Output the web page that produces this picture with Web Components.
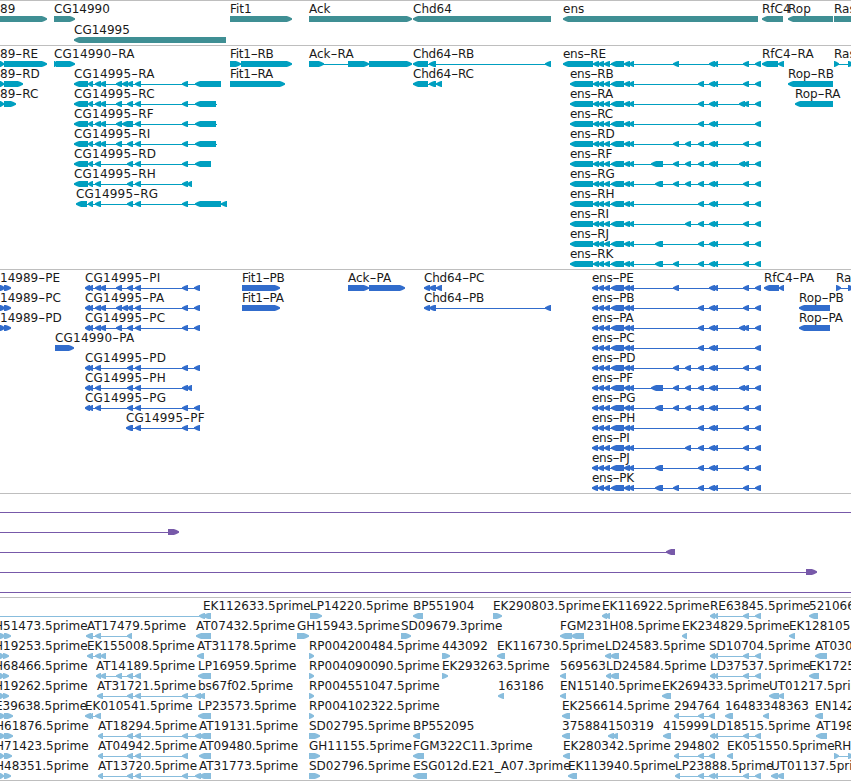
<!DOCTYPE html>
<html lang="en">
<head>
<meta charset="utf-8">
<title>Genome browser</title>
<style>
  body{
    margin: 0;
    background: #fff;
    overflow: hidden;
  }
</style>
</head>
<body>
<genome-browser>
  <genome-track name="genes" color="#3f8f94" row="21"></genome-track>
  <genome-track name="transcripts" color="#009fc0" row="20"></genome-track>
  <genome-track name="proteins" color="#316ccc" row="20"></genome-track>
  <genome-track name="insertions" color="#7759a9" row="20"></genome-track>
  <genome-track name="ests" color="#88bddd" row="20"></genome-track>
</genome-browser>

<script>
// exon groups shared by the isoforms
const CG = {
  a: '95-101 100-106',
  b: '95-101',
  end: '127-133 135-141 182-188'
};
const ENS = {
  A: '673-679', B: '685-691', C: '698-704', D: '709-715 713-718',
  E: '743-749', W: '739-745 743-749', F: '755-761',
  G: '655-663', H: '651-663'
};
const ensTail = keys => '598-604 604-610 611-624 624-630 629-634 ' +
  keys.split('').map(k => ENS[k]).join(' ');
const LD = '710-715 714-718 743-749 755-761';
const AT = '98-103 127-133 135-141 182-188';

const isoforms = [
  ['E', 'ADEF'], ['B', 'CDEF'], ['A', 'CDWF'], ['C', 'CDF'],
  ['D', 'ABCDEF'], ['F', 'HABCDWF'], ['G', 'GABCDEF'], ['H', 'CDEF'],
  ['I', 'BCDEF'], ['J', 'GCDEF'], ['K', 'GACDEF']
];

// tracking of the hyphenated labels, by gene
const SPACING = [
  [/^CG\d+-/, .2],
  [/^ens-/, -.3],
  [/^Fit1-/, -.3],
  [/^Chd64-/, -.2],
  [/^Rop-/, -.1]
];

// one feature: [label, label x, strand, exons, line start, line end]
const TRACKS = {
  genes: [
    [
      ['89', 0, '+', '0-47'],
      ['CG14990', 54, '+', '54-75'],
      ['Fit1', 230, '+', '230-292'],
      ['Ack', 309, '+', '309-412'],
      ['Chd64', 413, '-', '413-551'],
      ['ens', 563, '-', '563-758'],
      ['RfC4', 762, '-', '762-783'],
      ['Rop', 788, '-', '788-833'],
      ['Ras', 834, '+', '834-870']
    ],
    [['CG14995', 74, '-', '74-226']]
  ],
  transcripts: [
    [
      ['89-RE', 0, '+', '0-4 4-47'],
      ['CG14990-RA', 54, '+', '54-58 56-75'],
      ['Fit1-RB', 230, '+', '230-241 241-292'],
      ['Ack-RA', 309, '+', '309-324 348-369 369-412'],
      ['Chd64-RB', 413, '-', '413-428 429-436 545-551'],
      ['RfC4-RA', 762, '-', '762-778 778-784'],
      ['Ras', 834, '+', '834-839 848-854']
    ],
    [
      ['89-RD', 0, '+', '0-4 4-23'],
      ['CG14995-RA', 74, '-', `74-88 88-93 ${CG.a} 116-122 122-128 ${CG.end} 195-221`],
      ['Fit1-RA', 230, '+', '230-285'],
      ['Chd64-RC', 413, '-', '413-428 429-436 436-442'],
      ['Rop-RB', 788, '-', '788-833']
    ],
    [
      ['89-RC', 0, '+', '0-4 4-16'],
      ['CG14995-RC', 74, '-', `74-88 88-93 ${CG.a} 116-122 ${CG.end} 195-216`, 75, 217],
      ['Rop-RA', 795, '-', '795-833']
    ],
    [['CG14995-RF', 74, '-', `74-88 88-93 ${CG.a} 116-122 122-133 ${CG.end} 195-216`, 75, 217]],
    [['CG14995-RI', 74, '-', `74-88 88-93 ${CG.a} 116-122 ${CG.end} 195-216`, 75, 217]],
    [['CG14995-RD', 74, '-', `74-88 88-93 ${CG.b} ${CG.end} 195-211`]],
    [['CG14995-RH', 74, '-', `74-88 88-93 ${CG.b} ${CG.end} 187-192`]],
    [['CG14995-RG', 76, '-', `76-87 88-93 ${CG.b} ${CG.end} 195-221 221-227`]],
    [], [], []
  ],
  proteins: [
    [
      ['14989-PE', 0, '+', '0-5 4-11'],
      ['CG14995-PI', 85, '-', `85-90 88-93 ${CG.a} 116-122 ${CG.end} 194-200`],
      ['Fit1-PB', 242, '+', '242-280'],
      ['Ack-PA', 348, '+', '348-369 369-405'],
      ['Chd64-PC', 424, '-', '424-430 429-436 436-442'],
      ['RfC4-PA', 764, '-', '764-779 779-784'],
      ['Ras', 836, '+', '836-841 848-854']
    ],
    [
      ['14989-PC', 0, '+', '0-5 4-11'],
      ['CG14995-PA', 85, '-', `85-90 88-93 ${CG.a} 116-122 122-128 ${CG.end} 194-200`],
      ['Fit1-PA', 242, '+', '242-280'],
      ['Chd64-PB', 424, '-', '424-430 429-436 545-551'],
      ['Rop-PB', 799, '-', '799-830']
    ],
    [
      ['14989-PD', 0, '+', '0-5 4-11'],
      ['CG14995-PC', 85, '-', `85-90 88-93 ${CG.a} 116-122 ${CG.end} 194-200`],
      ['Rop-PA', 799, '-', '799-830']
    ],
    [['CG14990-PA', 55, '+', '55-74']],
    [['CG14995-PD', 85, '-', `85-90 88-93 ${CG.b} ${CG.end} 194-200`]],
    [['CG14995-PH', 85, '-', `85-90 88-93 ${CG.b} ${CG.end} 187-192`]],
    [['CG14995-PG', 85, '-', `85-90 88-93 ${CG.b} ${CG.end} 194-200`]],
    [['CG14995-PF', 126, '-', '126-133 135-141 182-188 194-200']],
    [], [], []
  ],
  insertions: [
    [['', 0, '+', '', 0, 851]],
    [['', 0, '+', '168-179', 0, 178]],
    [['', 0, '-', '666-675', 0, 675]],
    [['', 0, '+', '806-817', 0, 816]],
    [['', 0, '+', '', 0, 851]]
  ],
  ests: [
    [
      ['EK112633.5prime', 203, '-', '199-205 203-211', 0, 211],
      ['LP14220.5prime', 310, '+', '310-322'],
      ['BP551904', 413, '-', '413-423'],
      ['EK290803.5prime', 493, '+', '493-502'],
      ['EK116922.5prime', 602, '-', '602-607 605-610'],
      ['RE63845.5prime', 710, '-', LD],
      ['521066', 809, '-', '809-818']
    ],
    [
      ['H51473.5prime', -6, '+', '0-5 4-11'],
      ['AT17479.5prime', 87, '-', '86-93 95-101 127-132'],
      ['AT07432.5prime', 196, '-', '196-211'],
      ['GH15943.5prime', 297, '+', '297-309'],
      ['SD09679.3prime', 401, '+', '401-411'],
      ['FGM231H08.5prime', 560, '-', '560-572 571-584'],
      ['EK234829.5prime', 682, '-', '682-687'],
      ['EK128105', 789, '-', '789-795']
    ],
    [
      ['H19253.5prime', -6, '+', '0-4 3-9'],
      ['EK155008.5prime', 87, '-', '87-93 95-101 100-106'],
      ['AT31178.5prime', 197, '-', '197-204'],
      ['RP004200484.5prime', 309, '+', '309-314'],
      ['443092', 442, '+', '442-450'],
      ['EK116730.5prime', 497, '-', '497-505'],
      ['LD24583.5prime', 605, '-', '605-611 610-619'],
      ['SD10704.5prime', 709, '-', LD],
      ['AT030', 815, '-', '815-827']
    ],
    [
      ['H68466.5prime', -6, '+', '0-4 3-9'],
      ['AT14189.5prime', 96, '-', '96-101 100-106 116-122 127-133 135-141'],
      ['LP16959.5prime', 198, '-', '198-211'],
      ['RP004090090.5prime', 309, '+', '309-314'],
      ['EK293263.5prime', 442, '+', '442-448'],
      ['569563', 560, '-', '560-566'],
      ['LD24584.5prime', 606, '-', '606-611 610-619'],
      ['LD37537.5prime', 710, '-', LD],
      ['EK1725', 809, '-', '809-819']
    ],
    [
      ['H19262.5prime', -6, '+', '0-4 3-9'],
      ['AT31721.5prime', 97, '-', '97-103 127-133 135-141 182-188 195-201'],
      ['bs67f02.5prime', 198, '-', '199-205'],
      ['RP004551047.5prime', 309, '+', '309-314'],
      ['163186', 498, '-', '498-504'],
      ['EN15140.5prime', 560, '-', '560-566'],
      ['EK269433.5prime', 662, '-', '662-671'],
      ['UT01217.5prime', 769, '-', '769-779 778-784']
    ],
    [
      ['E39638.5prime', -5, '+', '0-5 4-13'],
      ['EK010541.5prime', 85, '-', '85-91 89-93 95-101'],
      ['LP23573.5prime', 198, '-', '198-211'],
      ['RP004102322.5prime', 309, '+', '309-314'],
      ['EK256614.5prime', 562, '-', '562-570'],
      ['294764', 674, '-', '674-679 698-704 709-715'],
      ['16483', 725, '-', '725-733'],
      ['348363', 763, '-', '763-769'],
      ['EN142', 815, '-', '815-823']
    ],
    [
      ['H61876.5prime', -5, '+', '0-5 4-13'],
      ['AT18294.5prime', 98, '-', AT + ' 195-201 199-211'],
      ['AT19131.5prime', 199, '-', ''],
      ['SD02795.5prime', 309, '+', '309-320'],
      ['BP552095', 413, '-', '413-420'],
      ['375884', 562, '-', '562-570'],
      ['150319', 608, '-', '608-614 612-618'],
      ['415999', 663, '-', '663-671'],
      ['LD18515.5prime', 710, '-', LD],
      ['AT198', 816, '-', '816-827']
    ],
    [
      ['H71423.5prime', -5, '+', '0-4 4-12'],
      ['AT04942.5prime', 98, '-', AT],
      ['AT09480.5prime', 199, '-', '199-211'],
      ['GH11155.5prime', 309, '+', '309-320'],
      ['FGM322C11.3prime', 413, '-', '413-424'],
      ['EK280342.5prime', 563, '-', '563-570'],
      ['294802', 674, '-', '674-679 698-704 709-715'],
      ['EK051550.5prime', 727, '-', '727-733'],
      ['RH', 834, '+', '834-839 848-854']
    ],
    [
      ['H48351.5prime', -5, '+', '0-4 4-11'],
      ['AT13720.5prime', 98, '-', AT + ' 195-201 199-211'],
      ['AT31773.5prime', 199, '-', ''],
      ['SD02796.5prime', 309, '+', '309-320'],
      ['ESG012d.E21_A07.3prime', 413, '-', '413-427'],
      ['EK113940.5prime', 568, '-', '568-577'],
      ['LP23888.5prime', 675, '-', '675-680 698-704 709-715 714-718 743-749 755-761'],
      ['UT01137.5prime', 771, '-', '771-778 777-784']
    ]
  ]
};

isoforms.forEach(([letter, keys], i) => {
  const start = i === 0 ? 563 : 570;
  TRACKS.transcripts[i].push(['ens-R' + letter, start, '-', `${start}-593 593-599 ` + ensTail(keys)]);
  TRACKS.proteins[i].push(['ens-P' + letter, 592, '-', '592-598 ' + ensTail(keys)]);
});

class FeatureRow extends HTMLElement{
  constructor(){
    super();
    this.shadowDOM = this.attachShadow({mode: 'open'});
  }

  set features(data){
    this._features = data;
    this.render();
  }

  // a bar with a rounded-off arrow head at the end it is read towards
  exon(range, strand){
    const [a, b] = range.split('-').map(Number);
    const head = Math.min(6, b - a);
    const [tip, back, dir] = strand === '+' ? [b, a, -1] : [a, b, 1];
    const mid = tip + dir * head * .5;
    const neck = tip + dir * head * .85;
    const points = `${back},13 ${neck},13 ${mid},13.8 ${tip},15.3 ` +
      `${tip},16.7 ${mid},18.2 ${neck},19 ${back},19`;
    return `<polygon points="${points}"/>`;
  }

  label(text, x){
    if(!text) return '';
    const rule = SPACING.find(([pattern]) => pattern.test(text));
    const spacing = rule ? rule[1] : 0;
    // the hyphen is drawn wider than the font's own
    const inner = text.replace('-', '<tspan textLength="7" lengthAdjust="spacingAndGlyphs">-</tspan>');
    return `<text x="${x}" y="10" letter-spacing="${spacing}">${inner}</text>`;
  }

  glyph([text, x, strand, exons, from, to]){
    const list = exons ? exons.split(' ') : [];
    if(list.length && from === undefined){
      from = Number(list[0].split('-')[0]) + 1;
      to = Number(list[list.length - 1].split('-')[1]) - 1;
    }
    const line = to === undefined ? '' : `<rect x="${from}" y="16" width="${to - from}" height="1"/>`;
    return line + list.map(r => this.exon(r, strand)).join('');
  }

  render(){
    this.shadowDOM.innerHTML=`
    <style>
      :host{
        display: block;
        height: var(--row-height);
      }
      svg{
        display: block;
        width: 100%;
        height: 100%;
        overflow: visible;
        fill: var(--feature-color);
      }
      text{
        font-family: "DejaVu Sans", sans-serif;
        font-size: 12px;
        fill: #1a1a1a;
      }
    </style>
    <svg>
      ${this._features.map(f => this.glyph(f)).join('')}
      ${this._features.map(f => this.label(f[0], f[1])).join('')}
    </svg>
    `;
  }
}
customElements.define('feature-row', FeatureRow);

class GenomeTrack extends HTMLElement{
  constructor(){
    super();
    this.shadowDOM = this.attachShadow({mode: 'open'});
  }

  connectedCallback(){
    this.render();
  }

  render(){
    this.shadowDOM.innerHTML=`
    <style>
      :host{
        display: flex;
        flex-direction: column;
        box-sizing: border-box;
        border-top: 1px solid #bebebe;
        padding: 2px 0 1px;
        --feature-color: ${this.getAttribute('color')};
        --row-height: ${this.getAttribute('row')}px;
      }
      :host([name="genes"]), :host([name="ests"]){
        padding-bottom: 0;
      }
    </style>
    `;
    TRACKS[this.getAttribute('name')].forEach(features => {
      const row = document.createElement('feature-row');
      row.features = features;
      this.shadowDOM.appendChild(row);
    });
  }
}
customElements.define('genome-track', GenomeTrack);

class GenomeBrowser extends HTMLElement{
  constructor(){
    super();
    this.shadowDOM = this.attachShadow({mode: 'open'});
    this.shadowDOM.innerHTML=`
    <style>
      :host{
        display: flex;
        flex-direction: column;
        width: 851px;
        overflow: hidden;
        border-bottom: 1px solid #bebebe;
      }
    </style>
    <slot></slot>
    `;
  }
}
customElements.define('genome-browser', GenomeBrowser);
</script>
</body>
</html>
